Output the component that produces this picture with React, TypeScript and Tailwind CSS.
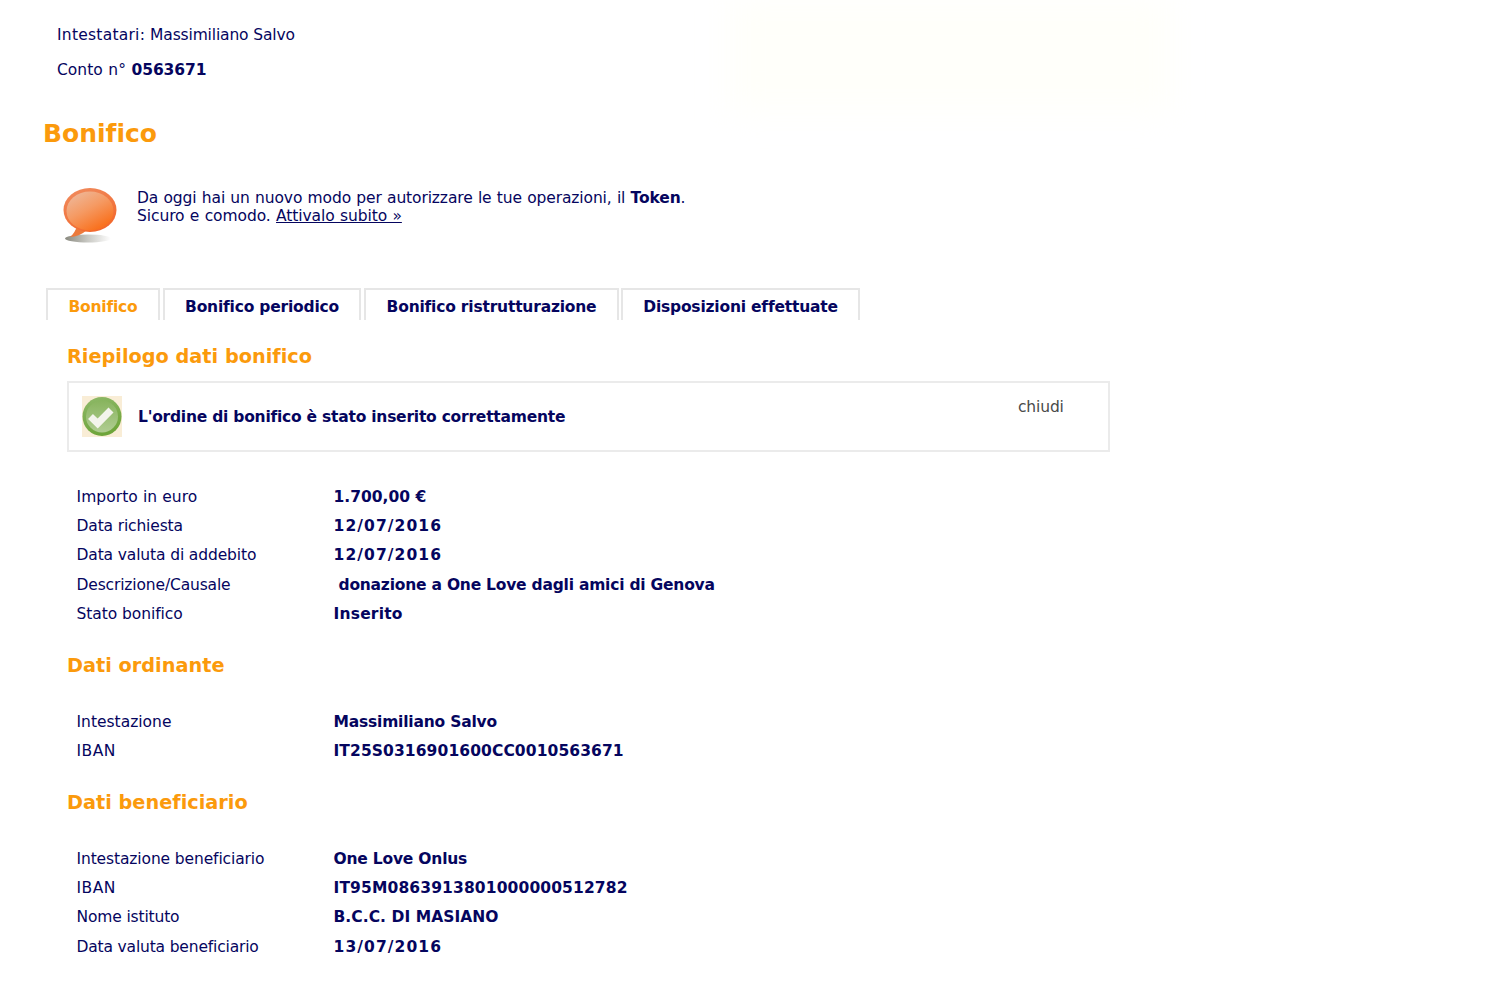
const navy = "text-[#05055e]";

function Row({ label, value, extra, labelExtra }: { label: string; value: string; extra?: string; labelExtra?: string }) {
  return (
    <div className="flex h-[29.25px] items-center">
      <div className={"w-[257px] shrink-0 text-[#05055e] " + (labelExtra ?? "")}>{label}</div>
      <div className={"font-bold text-[#05055e] " + (extra ?? "tracking-[-0.2px]")}>{value}</div>
    </div>
  );
}

function Bubble() {
  return (
    <svg width="60" height="60" viewBox="0 0 60 60" className="block">
      <defs>
        <linearGradient id="o" x1="0.2" y1="0" x2="0.7" y2="1">
          <stop offset="0" stopColor="#f08a5c" />
          <stop offset="1" stopColor="#f2662a" />
        </linearGradient>
        <linearGradient id="b" x1="0.15" y1="0" x2="0.75" y2="0.9">
          <stop offset="0" stopColor="#eeb99c" />
          <stop offset="0.5" stopColor="#f59a63" />
          <stop offset="1" stopColor="#f9711e" />
        </linearGradient>
        <linearGradient id="s" x1="0" x2="1">
          <stop offset="0" stopColor="#8a8a80" />
          <stop offset="0.5" stopColor="#c9c9c4" />
          <stop offset="1" stopColor="#ffffff" />
        </linearGradient>
      </defs>
      <ellipse cx="27" cy="52.5" rx="23" ry="4" fill="url(#s)" />
      <path d="M9 51 Q14 47 16 40 L26 44 Q18 51 9 51 Z" fill="#ec7a3c" />
      <ellipse cx="29" cy="24" rx="26.5" ry="22" fill="url(#o)" />
      <ellipse cx="29" cy="25" rx="23.5" ry="19.5" fill="url(#b)" />
    </svg>
  );
}

function Check() {
  return (
    <svg width="40" height="41" viewBox="0 0 40 41" className="block bg-[#f9edd6]">
      <defs>
        <linearGradient id="g" x1="0" y1="0" x2="0.3" y2="1">
          <stop offset="0" stopColor="#8fb96a" />
          <stop offset="1" stopColor="#6ea53a" />
        </linearGradient>
        <linearGradient id="h" x1="0" y1="0" x2="0" y2="1">
          <stop offset="0" stopColor="#88b45e" />
          <stop offset="1" stopColor="#b0cd92" />
        </linearGradient>
      </defs>
      <circle cx="20" cy="20.5" r="19.5" fill="url(#g)" />
      <circle cx="20" cy="20.5" r="16" fill="url(#h)" />
      <path d="M8.5 20.5 L15.7 27.5 L29 14" fill="none" stroke="#f3f4ec" strokeWidth="7" />
    </svg>
  );
}

function Tab({ children, active, w }: { children: string; active?: boolean; w: string }) {
  return (
    <div className={w + " h-[32px] border-2 border-b-0 border-[#e6e6e6] flex items-center justify-center font-bold tracking-[-0.2px] pt-[4px] " + (active ? "text-[#fb9a0c]" : navy)}>
      {children}
    </div>
  );
}

function Section({ children }: { children: string }) {
  return <h2 className="text-[19.3px] leading-[24px] font-bold text-[#fb9a0c]">{children}</h2>;
}

export default function App() {
  return (
    <div className="relative w-[1500px] h-[1000px] bg-white overflow-hidden text-[15.5px] leading-[18px] [font-variant-ligatures:none] font-['Verdana','DejaVu_Sans',sans-serif]">
      <div className="absolute left-[730px] top-0 w-[440px] h-[110px] bg-[#fffffa] blur-[16px]" />
      <div className="relative pl-[44px] pt-[26px]">
        <div className={"pl-[13px] " + navy}>
          <span className="tracking-[0.25px]">Intestatari:</span> <span className="tracking-[-0.15px]">Massimiliano Salvo</span>
        </div>
        <div className={"pl-[13px] mt-[17px] [word-spacing:0.7px] " + navy}>
          Conto n° <b className="tracking-[-0.1px]">0563671</b>
        </div>
        <h1 className="mt-[40px] -ml-[1px] text-[25px] leading-[30px] font-bold text-[#fb9a0c]">Bonifico</h1>

        <div className="mt-[40px] flex">
          <div className="ml-[17px] w-[76px] -mt-[3px]">
            <Bubble />
          </div>
          <div className={"[word-spacing:0.5px] " + navy}>
            <div className="tracking-[-0.12px]">
              Da oggi hai un nuovo modo per autorizzare le tue operazioni, il <b>Token</b>.
            </div>
            <div className="tracking-[-0.08px]">
              Sicuro e comodo. <a className="underline">Attivalo subito »</a>
            </div>
          </div>
        </div>

        <div className="mt-[42px] ml-[2px] flex">
          <Tab active w="w-[114px]">Bonifico</Tab>
          <Tab w="w-[198px] ml-[3px]">Bonifico periodico</Tab>
          <Tab w="w-[255px] ml-[3px]">Bonifico ristrutturazione</Tab>
          <Tab w="w-[239px] ml-[2px]">Disposizioni effettuate</Tab>
        </div>

        <div className="pl-[23px] pt-[25px]">
          <Section>Riepilogo dati bonifico</Section>
          <div className="mt-[12px] w-[1043px] h-[71px] border-2 border-[#ebebeb] relative flex items-center pl-[13px]">
            <Check />
            <div className={"ml-[16px] font-bold tracking-[-0.23px] " + navy}>L'ordine di bonifico è stato inserito correttamente</div>
            <div className="absolute left-[949px] top-[15px] text-[#4a4a4a] tracking-[-0.15px]">chiudi</div>
          </div>

          <div className="mt-[30.3px] pl-[9.5px]">
            <Row label="Importo in euro" labelExtra="tracking-[0.07px]" value="1.700,00 €" extra="tracking-[0px]" />
            <Row label="Data richiesta" labelExtra="tracking-[-0.15px]" value="12/07/2016" extra="tracking-[1.1px]" />
            <Row label="Data valuta di addebito" labelExtra="tracking-[-0.13px]" value="12/07/2016" extra="tracking-[1.1px]" />
            <Row label="Descrizione/Causale" labelExtra="tracking-[-0.15px]" value="donazione a One Love dagli amici di Genova" extra="pl-[5px] tracking-[-0.22px]" />
            <Row label="Stato bonifico" labelExtra="tracking-[-0.07px]" value="Inserito" extra="tracking-[0.2px]" />
          </div>

          <div className="mt-[25.7px]"><Section>Dati ordinante</Section></div>
          <div className="mt-[29px] pl-[9.5px]">
            <Row label="Intestazione" value="Massimiliano Salvo" />
            <Row label="IBAN" labelExtra="tracking-[0.5px]" value="IT25S0316901600CC0010563671" extra="tracking-[0.1px]" />
          </div>

          <div className="mt-[25.5px]"><Section>Dati beneficiario</Section></div>
          <div className="mt-[29.1px] pl-[9.5px]">
            <Row label="Intestazione beneficiario" labelExtra="tracking-[-0.12px]" value="One Love Onlus" />
            <Row label="IBAN" labelExtra="tracking-[0.5px]" value="IT95M0863913801000000512782" extra="tracking-[0.13px]" />
            <Row label="Nome istituto" labelExtra="tracking-[-0.15px]" value="B.C.C. DI MASIANO" extra="tracking-[0.05px]" />
            <Row label="Data valuta beneficiario" labelExtra="tracking-[-0.17px]" value="13/07/2016" extra="tracking-[1.1px]" />
          </div>
        </div>
      </div>
    </div>
  );
}
